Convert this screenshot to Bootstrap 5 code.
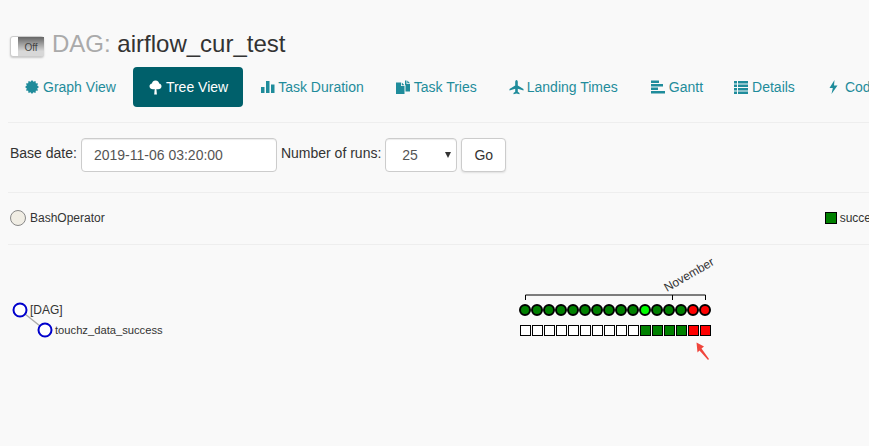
<!DOCTYPE html>
<html lang="en"><head><meta charset="utf-8"><title>DAG</title>
<link href="https://cdn.jsdelivr.net/npm/bootstrap@5.3.0/dist/css/bootstrap.min.css" rel="stylesheet">
<style>
html,body{height:446px;overflow:hidden}
body{background:#f9f9f9;font-family:"Liberation Sans",Arial,sans-serif;font-size:14px;color:#333;padding:0 0 0 10px}
.pagewrap{width:873px}
.titlebar{height:67px;padding-top:30px}
.toggler{width:34px;height:21px;margin-top:6px;border:1px solid #ccc;border-radius:3px;background:#fff;box-shadow:0 1px 2px rgba(0,0,0,.2);flex:none}
.toggler span{display:block;width:26px;height:19px;margin:0 0 0 7px;background:linear-gradient(#666,#d8d8d8 75%);font-size:10px;line-height:21px;text-align:center;color:#444}
.dagtitle{font-size:24px;line-height:28px;font-weight:400;margin:0 0 0 8px;color:#333}
.dagtitle em{font-style:normal;color:#aaa}
.tabrow{gap:0;flex-wrap:nowrap;white-space:nowrap;height:40px}
.tabrow .nav-link{color:#1f8c9b;padding:0;height:40px;line-height:40px;font-size:14px;border-radius:4px;display:flex;align-items:center;gap:3px}
.tabrow .nav-link svg{flex:none;fill:currentColor}
.tabrow .nav-link.active{background:#00606b;color:#fff;padding:0 15px 0 15px}
.tabrow .gr{margin:0 17px 0 15px;gap:4px}
.tabrow .td{margin:0 0 0 18px}.tabrow .tt{margin:0 0 0 32px}.tabrow .lt{margin:0 0 0 32px}.tabrow .ga{margin:0 0 0 33px;gap:4px}.tabrow .de{margin:0 0 0 31px;gap:4px}.tabrow .co{margin:0 0 0 33px;gap:6px}
.rule{height:1px;background:#eee;margin-left:-2px}
.rule1{margin-top:15px}
.filterbar{height:69px;padding-top:15px;gap:4px}
.filterbar label{margin:0;line-height:31px}
.fieldbox{height:34px;border:1px solid #ccc;border-radius:4px;background:#fff;color:#555;font-size:14px;box-shadow:inset 0 1px 1px rgba(0,0,0,.075);padding:0 12px}
.datebox{width:196px}
.selbox{width:72px;display:flex;align-items:center;justify-content:space-between;padding:0 5px 0 16px}
.selbox i{width:0;height:0;border:3.5px solid transparent;border-top:6px solid #333;border-bottom:0}
.gobtn{height:34px;width:45px;padding:0;background:#fff;border:1px solid #ccc;border-radius:4px;color:#333;font-size:14px;box-shadow:0 1px 2px rgba(0,0,0,.1)}
.legendrow{height:51px;font-size:12px;color:#333;padding-bottom:2px}
.opdot{width:16px;height:16px;border-radius:50%;background:#f0ede4;border:1px solid #888;margin-right:4px;flex:none}
.statekey{width:12px;height:12px;background:green;border:1px solid #000;margin-right:3px;flex:none}
.treeplot{display:block;margin-left:-10px}
.treeplot text{font-family:"Liberation Sans",Arial,sans-serif;font-size:12px;fill:#333}
.treeplot .tasklabel{font-size:11.2px}
</style></head><body>
<div class="pagewrap">
<div class="titlebar d-flex align-items-start">
 <div class="toggler"><span>Off</span></div>
 <h1 class="dagtitle"><em>DAG:</em> airflow_cur_test</h1>
</div>
<nav class="nav tabrow">
 <a class="nav-link gr" href="#"><svg width="14" height="14" viewBox="0 0 14 14"><path d="M14 7L12.200 8.400 13.060 10.500 10.800 10.800 10.500 13.060 8.400 12.200 7 14 5.600 12.200 3.500 13.060 3.200 10.800 .94 10.500 1.800 8.400 0 7 1.800 5.600 .94 3.500 3.200 3.200 3.500 .94 5.600 1.800 7 0 8.400 1.800 10.500 .94 10.800 3.200 13.060 3.500 12.200 5.600z"/></svg>Graph View</a>
 <a class="nav-link active" href="#"><svg width="15" height="15" viewBox="0 0 15 15"><path d="M7.500 0.500c2.300 0 3.600 1.500 3.600 3 1.500.300 2.400 1.400 2.400 2.800 0 1.800-1.500 3-3.400 3-.7 0-1.300-.2-1.700-.4l.5 5.600H6.200l.5-5.600c-.5.200-1 .4-1.700.4-1.900 0-3.500-1.200-3.500-3 0-1.400 1-2.500 2.500-2.800 0-1.500 1.300-3 3.500-3z"/></svg>Tree View</a>
 <a class="nav-link td" href="#"><svg width="14" height="14" viewBox="0 0 14 14"><path d="M0 7h3.500v6H0zM5 1h3.500v12H5zM10 4.500h3.500V13H10z"/></svg>Task Duration</a>
 <a class="nav-link tt" href="#"><svg width="15" height="15" viewBox="0 0 15 15"><path d="M0 2.500h5v3.500h3.500V14H0zM5.800 2.500l2.700 2.700H5.800zM9 .5h1.500v3.500H14v7.500H9.500V5.300L9 4.800zM11.300.5L14 3.200h-2.700z"/></svg>Task Tries</a>
 <a class="nav-link lt" href="#"><svg width="15" height="15" viewBox="0 0 15 15"><path d="M7.500 0c.8 0 1.300 1 1.300 2.200V5.500L14.500 9v1.500L8.800 8.700v3l1.700 1.300v1.200l-3-.8-3 .8V13l1.700-1.300v-3L.5 10.500V9l5.700-3.500V2.200C6.200 1 6.700 0 7.500 0z"/></svg>Landing Times</a>
 <a class="nav-link ga" href="#"><svg width="14" height="14" viewBox="0 0 14 14"><path d="M0 0.500h8v2.500H0zM0 4h12v2.500H0zM0 7.500h7V10H0zM0 11h14v2.500H0z"/></svg>Gantt</a>
 <a class="nav-link de" href="#"><svg width="14" height="14" viewBox="0 0 14 14"><path d="M0 1h3v2.500H0zM4 1h10v2.500H4zM0 4.500h3V7H0zM4 4.500h10V7H4zM0 8h3v2.500H0zM4 8h10v2.500H4zM0 11.500h3V14H0zM4 11.500h10V14H4z"/></svg>Details</a>
 <a class="nav-link co" href="#"><svg width="11" height="14" viewBox="0 0 11 14"><path d="M6.500 0L1.500 8h3.300L3.500 14l6-8.500H6z"/></svg>Code</a>
</nav>
<div class="rule rule1"></div>
<form class="filterbar d-flex align-items-start" onsubmit="return false">
 <label>Base date:</label>
 <div class="fieldbox datebox d-flex align-items-center">2019-11-06 03:20:00</div>
 <label>Number of runs:</label>
 <div class="fieldbox selbox">25<i></i></div>
 <button class="gobtn" type="button">Go</button>
</form>
<div class="rule"></div>
<div class="legendrow d-flex align-items-center">
 <span class="opdot"></span><span>BashOperator</span>
 <span class="statekey ms-auto"></span><span class="statelabel">success</span>
</div>
<div class="rule"></div>
</div>
<svg class="treeplot" width="869" height="201" viewBox="0 245 869 201" aria-label="Tree view">
 <line x1="20" y1="310" x2="45" y2="330" stroke="#aaa" stroke-width="1.500"/>
 <circle cx="20" cy="310" r="6.500" fill="#fff" stroke="#00c" stroke-width="2"/>
 <circle cx="45" cy="330" r="6.500" fill="#fff" stroke="#00c" stroke-width="2"/>
 <text x="30" y="314">[DAG]</text>
 <text class="tasklabel" x="55" y="334">touchz_data_success</text>
 <path d="M525.500 300V295H705.500V300M672.500 295V300" fill="none" stroke="#000"/>
 <text transform="translate(667 292) rotate(-30)">November</text>
 <g id="runs" stroke="#000" stroke-width="2"></g>
 <path d="M696.500 342.500L704 346.500L701.500 348.500L709 359L708 360L699.500 350.500L697.500 352.500Z" fill="#f0463c"/>
</svg>
<script>
var NS="http://www.w3.org/2000/svg",g=document.getElementById("runs");
var dots=["g","g","g","g","g","g","g","g","g","g","l","g","g","g","r","r"];
var fills={g:"#008000",l:"#00ff00",r:"#ff0000",w:"#ffffff"};
dots.forEach(function(c,i){
 var o=document.createElementNS(NS,"circle");
 o.setAttribute("cx",525+12*i);o.setAttribute("cy",310);o.setAttribute("r",5);o.setAttribute("fill",fills[c]);g.appendChild(o);
 var s=document.createElementNS(NS,"rect");
 s.setAttribute("x",520.5+12*i);s.setAttribute("y",325.5);s.setAttribute("width",10);s.setAttribute("height",10);
 s.setAttribute("fill",i<10?fills.w:(i<14?fills.g:fills.r));s.setAttribute("stroke-width",1);g.appendChild(s);
});
</script>
<script src="https://cdn.jsdelivr.net/npm/bootstrap@5.3.0/dist/js/bootstrap.bundle.min.js"></script>
</body></html>
